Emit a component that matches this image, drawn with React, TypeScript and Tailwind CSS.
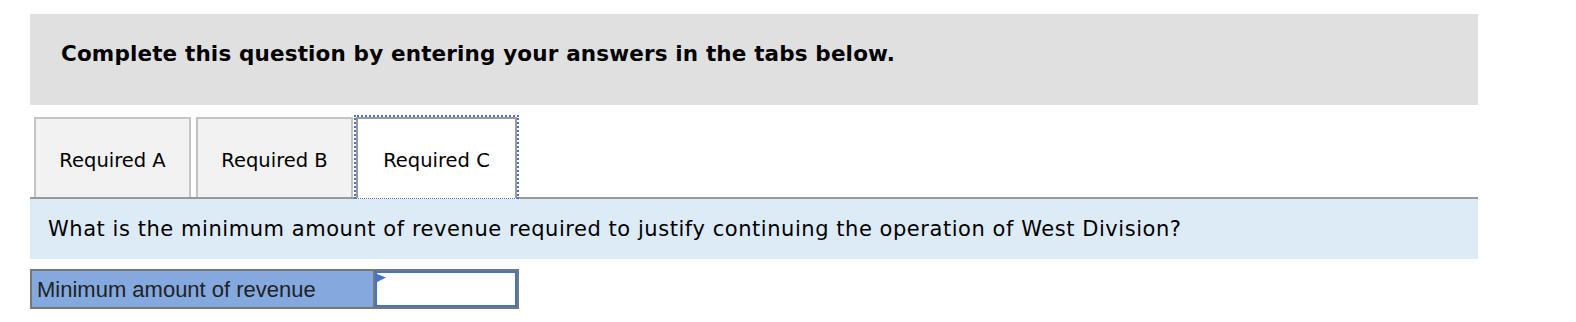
export default function App() {
  const verdana = { fontFamily: '"DejaVu Sans", Verdana, sans-serif' };
  return (
    <div className="min-h-[322px] bg-white pl-[30px] pt-[14px]" style={verdana}>
      <div className="w-[1448px]">
        {/* instructions */}
        <div className="flex h-[91px] items-start bg-[#e0e0e0] pl-[31px] pt-[27px]">
          <p className="text-[21.5px] font-bold leading-[26px] tracking-[0.15px] text-black">
            Complete this question by entering your answers in the tabs below.
          </p>
        </div>

        {/* tabs */}
        <div className="mt-[10px] flex items-end border-b-2 border-[#999] pl-[4px]">
          <button className="flex h-[80px] w-[157px] shrink-0 items-center justify-center border-2 border-b-0 border-[#c4c4c4] bg-[#f2f2f2] pt-[5px] text-[19.5px] text-black">
            Required A
          </button>
          <button className="ml-[5px] flex h-[80px] w-[157px] shrink-0 items-center justify-center border-2 border-b-0 border-[#c4c4c4] bg-[#f2f2f2] pt-[5px] text-[19.5px] text-black">
            Required B
          </button>
          <div className="relative -mb-[2px] ml-[1px] h-[84px] w-[165px] shrink-0 border-x-2 border-t-2 border-b border-dotted border-[#4a72c0] bg-white">
            <button className="flex h-[81px] w-full items-center justify-center border-2 border-b-0 border-[#999] bg-white pt-[5px] text-[19.5px] text-black">
              Required C
            </button>
          </div>
        </div>

        {/* question */}
        <div className="flex h-[60px] items-center bg-[#ddebf7] pl-[18px]">
          <p className="text-[21px] leading-[24px] tracking-[0.55px] text-black">
            What is the minimum amount of revenue required to justify continuing the operation of West Division?
          </p>
        </div>

        {/* answer row */}
        <div className="mt-[10px] flex h-[40px] w-[489px] border-2 border-[#777]">
          <div
            className="flex w-[343px] shrink-0 items-center border-r-2 border-[#777] bg-[#84a9df] pl-[5px] text-[22px] text-[#222]"
            style={{ fontFamily: '"Liberation Sans", Arial, sans-serif' }}
          >
            Minimum amount of revenue
          </div>
          <div className="relative flex-1 border-2 border-[#4472c4] bg-white">
            <svg className="absolute left-0 top-[1px]" width="9" height="8" viewBox="0 0 9 8">
              <polygon points="0,0 9,3.5 0,8" fill="#4472c4" />
            </svg>
          </div>
        </div>
      </div>
    </div>
  );
}
